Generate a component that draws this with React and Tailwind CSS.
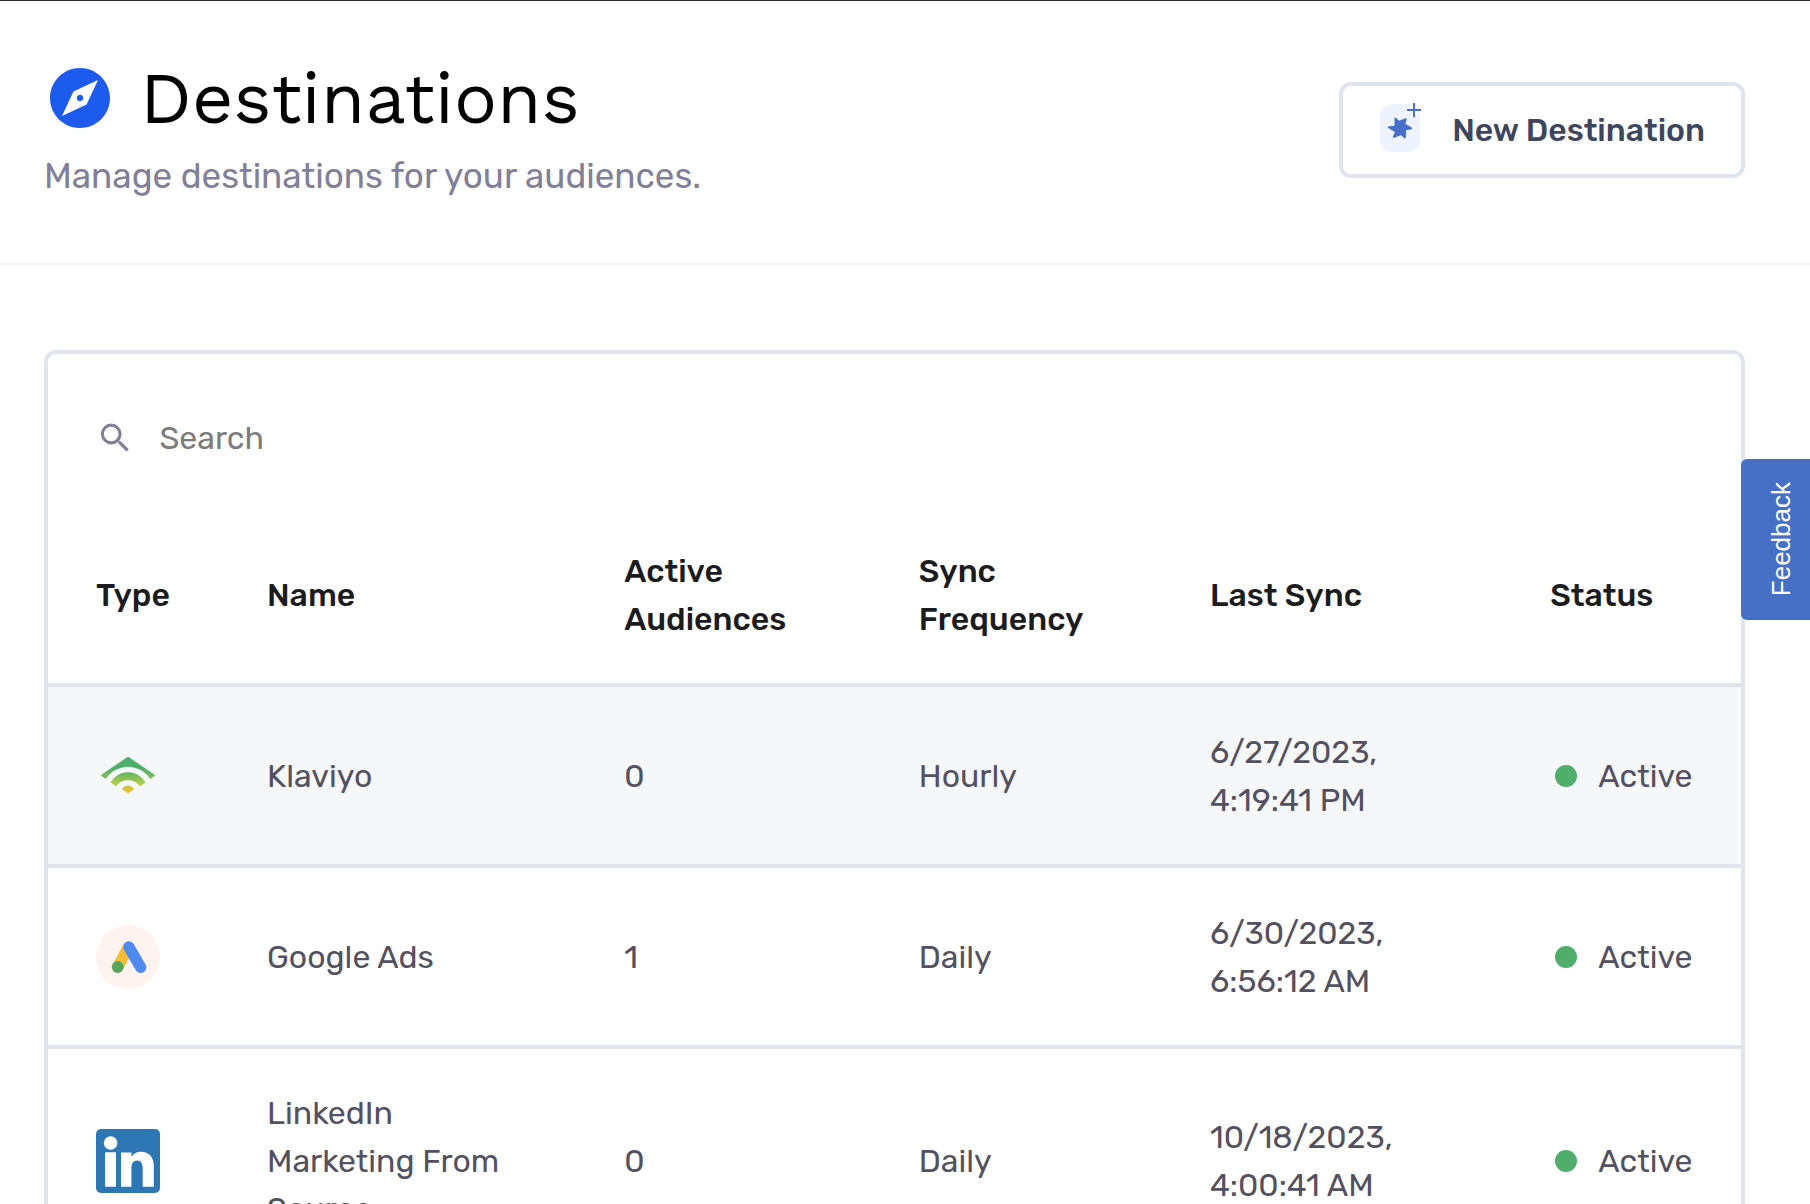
import React, { useState } from 'react';
import { MdExplore, MdSearch } from 'react-icons/md';

const KlaviyoLogo = () => (
  <svg className="size-16" viewBox="0 0 192 192" aria-hidden="true">
    <defs>
      <linearGradient id="klaviyo" gradientUnits="userSpaceOnUse" x1="0" y1="70" x2="0" y2="146">
        <stop offset="0" stopColor="#4cae6a" />
        <stop offset="0.3" stopColor="#72b95c" />
        <stop offset="0.6" stopColor="#a8cb4e" />
        <stop offset="0.8" stopColor="#cfc63e" />
        <stop offset="1" stopColor="#f0bd2a" />
      </linearGradient>
    </defs>
    <g fill="url(#klaviyo)" stroke="url(#klaviyo)" strokeWidth="2" strokeLinejoin="round">
      <path d="M96 39 L177 94 L163 104 A80 80 0 0 0 29 104 L15 94 Z" />
      <path d="M45 115 A59 59 0 0 1 147 115 L132 126 A44 44 0 0 0 60 126 Z" />
      <path d="M79 136 A19 19 0 0 1 113 136 L96 147 Z" />
    </g>
  </svg>
);

const GoogleAdsLogo = () => (
  <svg className="size-16" viewBox="0 0 64 64" aria-hidden="true">
    <circle cx="32" cy="32" r="32" fill="#fef3ee" />
    <path d="M32.5 22 L21.7 42" stroke="#f6bd35" strokeWidth="11.3" />
    <circle cx="21.7" cy="42" r="5.9" fill="#56a55a" />
    <path d="M32.8 21.9 L44.7 42.3" stroke="#4f8af2" strokeWidth="11.3" strokeLinecap="round" />
  </svg>
);

const LinkedInLogo = () => (
  <svg className="size-16" viewBox="0 0 64 64" aria-hidden="true">
    <rect width="64" height="64" rx="5" fill="#2e77b5" />
    <g fill="#fff">
      <circle cx="14.6" cy="14" r="6.8" />
      <rect x="9" y="23.3" width="11" height="34.4" rx="0.8" />
      <path d="M25 23.4 H35.4 V27.6 C37.4 24.8 40.4 22.7 44.8 22.7 C53.2 22.7 57.8 28 57.8 37.4 V57.7 H46.7 V39.6 C46.7 34.6 45 31.6 41.2 31.6 C37.4 31.6 35.4 34.6 35.4 39.2 V57.7 H25 Z" />
    </g>
  </svg>
);

const NewDestinationIcon = () => (
  <svg className="h-14 w-12" viewBox="0 6 144 168" aria-hidden="true">
    <rect x="0" y="12" width="120" height="144" rx="36" fill="#eff3ff" />
    <path
      d="M46 55 L56 65 L78 57 L73 73 L94 85 L76 89 L75 113 L64 103 L41 111 L48 95 L26 82 L46 79 Z"
      fill="#4670c6"
      stroke="#4670c6"
      strokeWidth="5"
      strokeLinejoin="round"
    />
    <path d="M102 9 V51 M81 30 H123" stroke="#fff" strokeWidth="16" />
    <path d="M102 9 V51 M81 30 H123" stroke="#4670c6" strokeWidth="6" />
  </svg>
);

const columns = [
  { label: 'Type', width: 'w-[10.1%]' },
  { label: 'Name', width: 'w-[21.1%]' },
  { label: 'Active Audiences', width: 'w-[17.4%]' },
  { label: 'Sync Frequency', width: 'w-[17.2%]' },
  { label: 'Last Sync', width: 'w-[20.1%]' },
  { label: 'Status', width: 'w-[14.1%]' },
];

const destinations = [
  { logo: KlaviyoLogo, name: 'Klaviyo', audiences: 0, frequency: 'Hourly', lastSync: '6/27/2023, 4:19:41 PM', status: 'Active' },
  { logo: GoogleAdsLogo, name: 'Google Ads', audiences: 1, frequency: 'Daily', lastSync: '6/30/2023, 6:56:12 AM', status: 'Active' },
  { logo: LinkedInLogo, name: 'LinkedIn Marketing From Source', audiences: 0, frequency: 'Daily', lastSync: '10/18/2023, 4:00:41 AM', status: 'Active' },
];

const App = () => {
  const [query, setQuery] = useState('');
  const rows = destinations.filter(d => d.name.toLowerCase().includes(query.toLowerCase()));

  return (
    <div className="h-screen overflow-hidden border-t border-[#2f2c30] bg-white font-['Rubik','Roboto',sans-serif]">
      {/* Page header */}
      <header className="flex items-start justify-between border-b-2 border-[#f5f6f8] pt-[57px] pr-[65px] pb-[57px] pl-11">
        <div>
          <div className="flex items-center gap-6">
            <MdExplore size={72} className="text-[#1d5bee]" aria-hidden="true" />
            <h1 className="font-['Work_Sans','Inter',sans-serif] text-7xl leading-20 text-black">Destinations</h1>
          </div>
          <p className="mt-2 text-[35px] leading-[60px] text-[#827f98]">Manage destinations for your audiences.</p>
        </div>
        <button className="mt-6 flex h-24 items-center gap-6 rounded-xl border-4 border-[#dfe4ed] pr-9 pl-[37px] text-[32px] font-medium text-[#3d465c]">
          <NewDestinationIcon />
          New Destination
        </button>
      </header>

      <main className="pt-[85px] pr-[65px] pl-11">
        <section className="rounded-xl border-4 border-[#dfe4ed]">
          <label className="flex items-center gap-[25px] px-12 pt-15 pb-11">
            <MdSearch size={40} className="text-[#827f98]" aria-hidden="true" />
            <input
              type="text"
              aria-label="Search"
              placeholder="Search"
              value={query}
              onChange={e => setQuery(e.target.value)}
              className="h-12 w-full text-[32px] outline-none placeholder:text-[#7c7c7c]"
            />
          </label>

          <table className="w-full table-fixed text-left text-[32px] leading-12">
            <thead>
              <tr className="h-[179px] border-b-4 border-[#dfe4ed] text-[#1c1c1e]">
                {columns.map(col => (
                  <th key={col.label} className={`${col.width} pl-12 font-medium`}>{col.label}</th>
                ))}
              </tr>
            </thead>
            <tbody className="text-[#53515f]">
              {rows.map(row => (
                <tr key={row.name} className="h-[181px] border-b-4 border-[#dfe4ed] first:bg-[#f6f7f9]">
                  <td className="pl-12"><row.logo /></td>
                  <td className="py-10 pr-12 pl-12">{row.name}</td>
                  <td className="pl-12">{row.audiences}</td>
                  <td className="pl-12">{row.frequency}</td>
                  <td className="pr-12 pl-12">{row.lastSync}</td>
                  <td className="pl-[53px]">
                    <div className="flex items-center gap-[21px]">
                      <span className="size-[22px] shrink-0 rounded-full bg-[#4fae6a]" />
                      {row.status}
                    </div>
                  </td>
                </tr>
              ))}
            </tbody>
          </table>
        </section>
      </main>

      <button className="fixed top-[459px] right-0 flex h-[161px] w-[69px] items-center justify-center rounded-l-md bg-[#4670c6] pl-3 font-['Liberation_Sans',Arial,sans-serif] text-[26px] text-white">
        <span className="rotate-180 [writing-mode:vertical-rl]">Feedback</span>
      </button>
    </div>
  );
};

export default App;
